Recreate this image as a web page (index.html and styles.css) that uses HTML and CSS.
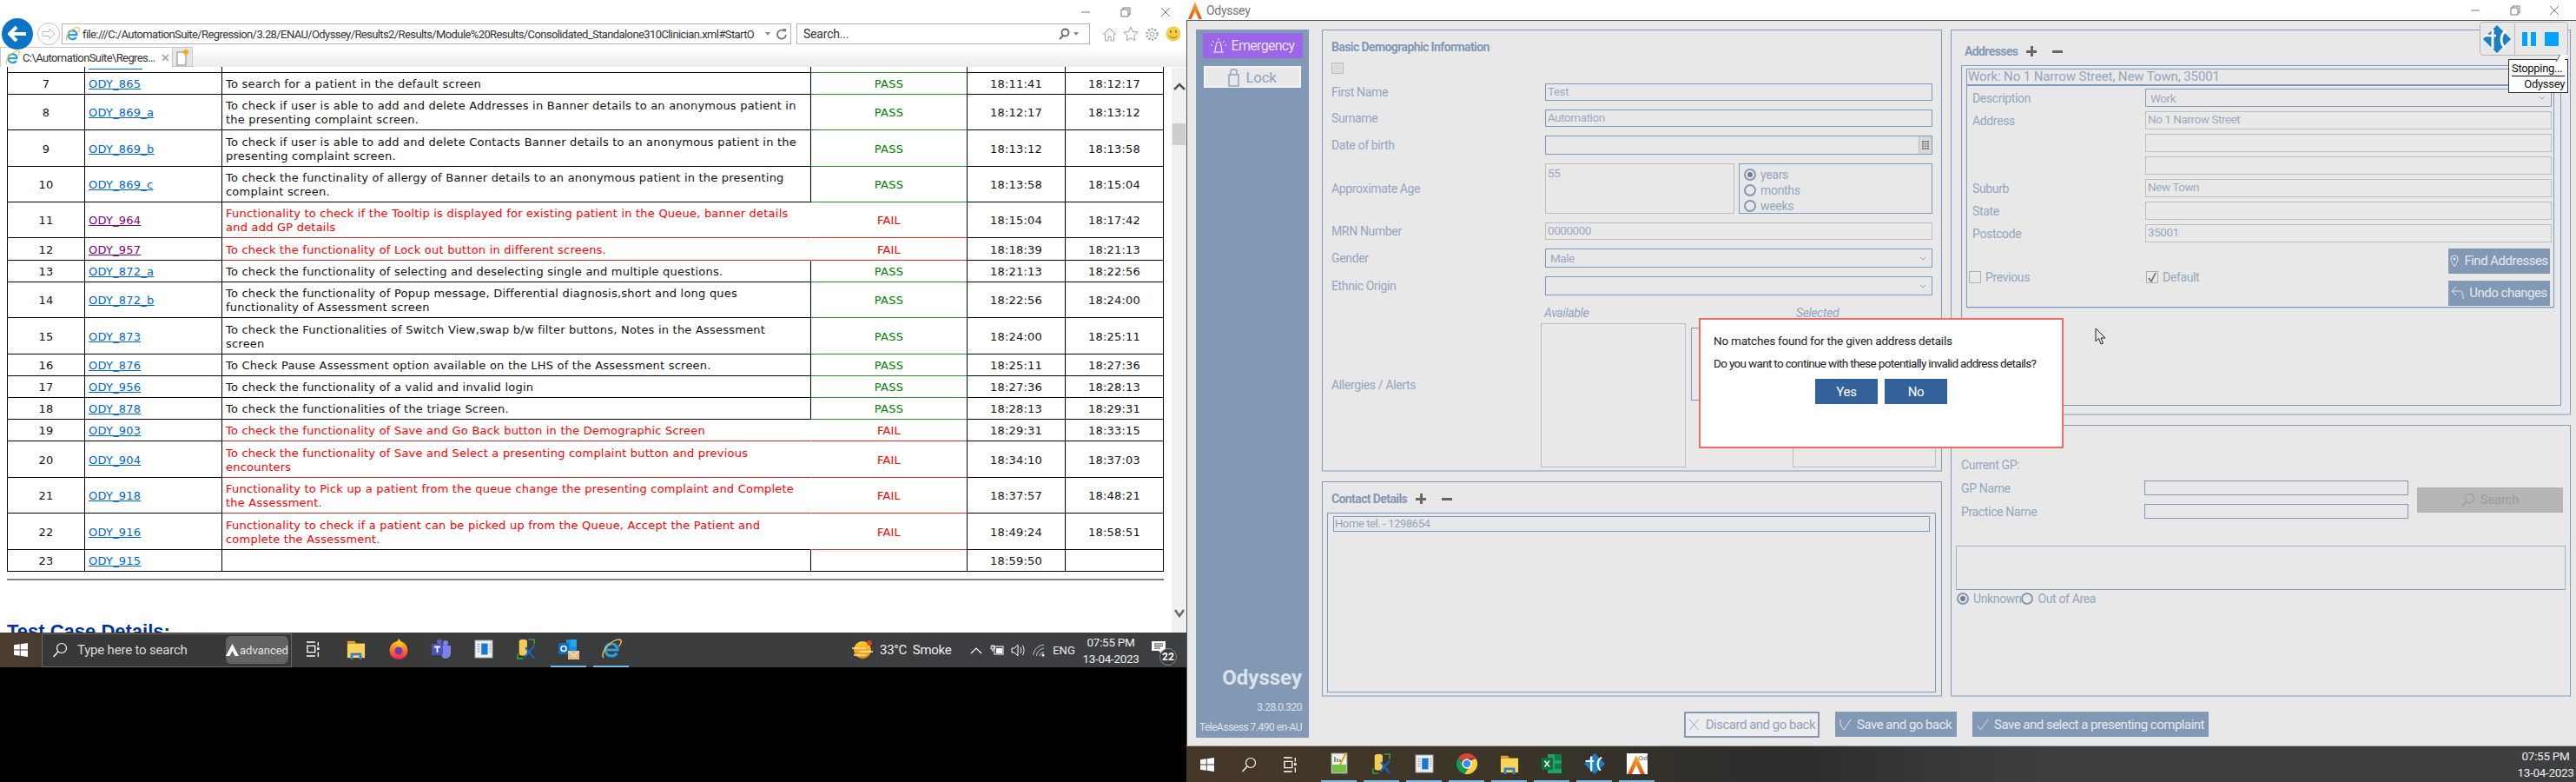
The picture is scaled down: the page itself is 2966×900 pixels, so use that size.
FILE: index.html
```html
<!DOCTYPE html>
<html lang="en">
<head>
<meta charset="utf-8">
<title>Odyssey regression run</title>
<link rel="stylesheet" href="styles.css">
</head>
<body>
<svg class="sprite" xmlns="http://www.w3.org/2000/svg">
  <defs>
    <linearGradient id="fox" x1="0" y1="0" x2="0" y2="1"><stop offset="0" stop-color="#ffc21f"/><stop offset=".55" stop-color="#ff6a2b"/><stop offset="1" stop-color="#e8215f"/></linearGradient>
    <linearGradient id="peak" x1="0" y1="0" x2="0" y2="1"><stop offset="0" stop-color="#f9b233"/><stop offset="1" stop-color="#e2560f"/></linearGradient>
    <linearGradient id="sun" x1="0" y1="0" x2="0" y2="1"><stop offset="0" stop-color="#ffcc2e"/><stop offset="1" stop-color="#ee8a16"/></linearGradient>
    <symbol id="win" viewBox="0 0 16 16"><path fill="currentColor" d="M0 2.3 6.8 1.3V7.6H0ZM7.7 1.2 16 0V7.6H7.7ZM0 8.4H6.8V14.7L0 13.7ZM7.7 8.4H16V16L7.7 14.8Z"/></symbol>
    <symbol id="find" viewBox="0 0 18 18"><circle cx="11" cy="7" r="5.5" fill="none" stroke="currentColor" stroke-width="1.2"/><path d="M7 11 1.5 17" stroke="currentColor" stroke-width="1.4"/></symbol>
    <symbol id="view" viewBox="0 0 18 22"><path d="M0 2H11M0 20H11M1 7H11V15H1ZM15 2V7M15 15V21" fill="none" stroke="#fff" stroke-width="1.5"/><rect x="13.5" y="9" width="3" height="3" fill="#fff"/></symbol>
    <symbol id="folder" viewBox="0 0 24 26"><path fill="#e0a521" d="M1 3H10L12 6H1Z"/><path fill="#fbd25a" d="M1 6H23V24H1Z"/><path fill="#2f7fd0" d="M5 18H19V26H16V21H8V26H5Z"/></symbol>
    <symbol id="ie" viewBox="0 0 24 24"><path d="M5.5 13H19C19 9 16 6 12 6S5 9 5 13 8 20 12 20C15 20 17 18.600 18 16.500" fill="none" stroke="#2a9fe0" stroke-width="3.200"/><path d="M3 22C0 19 4 11 10 6 16 1 21 0 23 2 24 4 22 7 20.500 9" fill="none" stroke="#f2bd3c" stroke-width="1.500"/></symbol>
    <symbol id="dock" viewBox="0 0 24 24"><rect x="1" y="1" width="22" height="22" fill="#eef1f4" stroke="#8a9199"/><rect x="9" y="5" width="8" height="14" fill="#1677d8"/><path d="M4 6H7M4 9H7M4 12H7M4 15H7M19 6H21M19 9H21M19 12H21M19 15H21" stroke="#7a8490"/></symbol>
    <symbol id="dbtool" viewBox="0 0 24 28"><path fill="#f3cc55" d="M3 4C3 1 13 1 13 4V20C13 23 3 23 3 20Z"/><path d="M15 2H22V8M1 20V26H8" fill="none" stroke="#37a03e" stroke-width="1.800"/><path d="M10 24 22 10M11 12 22 26" stroke="#1467b8" stroke-width="2.400"/></symbol>
    <symbol id="tosca" viewBox="0 0 32 40" preserveAspectRatio="none"><path fill="#1b7fc4" d="M16 0 32 20 16 40 0 20Z"/><path d="M2 15H15M11 6V34" stroke="#fff" stroke-width="3" fill="none"/><path d="M27 8C20 12 19 25 25 33" stroke="#fff" stroke-width="3" fill="none"/></symbol>
    <symbol id="peakmark" viewBox="0 0 16 20"><path fill="url(#peak)" d="M8 0 16 20H12.500L8 11 3.500 20H0Z"/></symbol>
  </defs>
</svg>

<div class="desktop">
  <section class="screen screen-left">
    <div class="ie">
      <div class="ie-title">
        <div class="win-btn"><svg width="12" height="12" viewBox="0 0 12 12"><path d="M1 6H11" stroke="#777"/></svg></div>
        <div class="win-btn"><svg width="12" height="12" viewBox="0 0 12 12"><path d="M3 3V1H11V9H9M1 3H9V11H1Z" fill="none" stroke="#777"/></svg></div>
        <div class="win-btn"><svg width="12" height="12" viewBox="0 0 12 12"><path d="M1 1 11 11M11 1 1 11" stroke="#777"/></svg></div>
      </div>
      <div class="ie-nav">
        <div class="back"><svg width="22" height="20" viewBox="0 0 22 20"><path d="M10 2 2 10 10 18M2 10H21" fill="none" stroke="#fff" stroke-width="4"/></svg></div>
        <div class="forward"><svg width="16" height="14" viewBox="0 0 16 14"><path d="M9 1 15 7 9 13V9.500H1V4.500H9Z" fill="none" stroke="#bbb"/></svg></div>
        <div class="address">
          <svg width="17" height="17"><use href="#ie"/></svg>
          <span class="url">file:///C:/AutomationSuite/Regression/3.28/ENAU/Odyssey/Results2/Results/Module%20Results/Consolidated_Standalone310Clinician.xml#StartO</span>
          <span class="caret"></span>
          <svg width="12" height="14" viewBox="0 0 12 14"><path d="M9.500 4A5 5 0 1 0 11 8" fill="none" stroke="#777" stroke-width="1.800"/><path d="M7 1 11 1V5Z" fill="#777"/></svg>
        </div>
        <div class="searchbox">
          <span class="search-hint">Search...</span>
          <svg width="14" height="14" viewBox="0 0 14 14"><circle cx="8.500" cy="5.500" r="4" fill="none" stroke="#666" stroke-width="1.800"/><path d="M6 9 2 13" stroke="#666" stroke-width="2"/></svg>
          <span class="caret"></span>
        </div>
        <div class="tools">
          <svg width="17" height="17" viewBox="0 0 17 17"><path d="M1 9 8.500 1.500 16 9M3.500 8V16H7V11H10V16H13.500V8" fill="none" stroke="#9aa0a6"/></svg>
          <svg width="18" height="18" viewBox="0 0 18 18"><path d="M9 1 11.400 6.500 17 7 12.800 10.800 14 16.500 9 13.600 4 16.500 5.200 10.800 1 7 6.600 6.500Z" fill="none" stroke="#9aa0a6"/></svg>
          <svg width="17" height="17" viewBox="0 0 17 17"><circle cx="8.500" cy="8.500" r="2.500" fill="none" stroke="#9aa0a6"/><circle cx="8.500" cy="8.500" r="6" fill="none" stroke="#9aa0a6" stroke-width="2.400" stroke-dasharray="2 1.800"/></svg>
          <svg width="18" height="18" viewBox="0 0 18 18"><circle cx="9" cy="9" r="8.500" fill="#f3cf45"/><path d="M6 5V8M12 5V8" stroke="#8a6d10" stroke-width="1.500"/><path d="M4.500 11C6 14.500 12 14.500 13.500 11" fill="none" stroke="#8a6d10"/></svg>
        </div>
      </div>
      <div class="ie-tabs">
        <div class="tab">
          <svg width="17" height="17"><use href="#ie"/></svg>
          <span class="tab-title">C:\AutomationSuite\Regres...</span>
          <svg width="9" height="9" viewBox="0 0 9 9"><path d="M1 1 8 8M8 1 1 8" stroke="#999" stroke-width="1.500"/></svg>
        </div>
        <div class="newtab"><svg width="15" height="20" viewBox="0 0 15 20"><rect x="1" y="4" width="10" height="15" fill="#fff" stroke="#888"/><path d="M11 0V8M7.500 4H14.500M8.500 1.500 13.500 6.500M13.500 1.500 8.500 6.500" stroke="#f2a81d" stroke-width="1.300"/></svg></div>
      </div>
      <div class="ie-page">
        <div class="doc">
          <table class="results">
            <colgroup><col class="c-num"><col class="c-id"><col class="c-desc"><col class="c-status"><col class="c-time"><col class="c-time"></colgroup>
            <tbody>
              <tr class="h25 pass"><td></td><td><span class="clip-link"></span></td><td></td><td class="s"></td><td></td><td></td></tr>
              <tr class="h25 pass"><td>7</td><td><a href="#">ODY_865</a></td><td>To search for a patient in the default screen</td><td class="s">PASS</td><td>18:11:41</td><td>18:12:17</td></tr>
              <tr class="h41 pass"><td>8</td><td><a href="#">ODY_869_a</a></td><td>To check if user is able to add and delete Addresses in Banner details to an anonymous patient in<br>the presenting complaint screen.</td><td class="s">PASS</td><td>18:12:17</td><td>18:13:12</td></tr>
              <tr class="h42 pass"><td>9</td><td><a href="#">ODY_869_b</a></td><td>To check if user is able to add and delete Contacts Banner details to an anonymous patient in the<br>presenting complaint screen.</td><td class="s">PASS</td><td>18:13:12</td><td>18:13:58</td></tr>
              <tr class="h41 pass"><td>10</td><td><a href="#">ODY_869_c</a></td><td>To check the functinality of allergy of Banner details to an anonymous patient in the presenting<br>complaint screen.</td><td class="s">PASS</td><td>18:13:58</td><td>18:15:04</td></tr>
              <tr class="h41 fail"><td>11</td><td><a class="seen" href="#">ODY_964</a></td><td class="d">Functionality to check if the Tooltip is displayed for existing patient in the Queue, banner details<br>and add GP details</td><td class="s">FAIL</td><td>18:15:04</td><td>18:17:42</td></tr>
              <tr class="h26 fail"><td>12</td><td><a class="seen" href="#">ODY_957</a></td><td class="d">To check the functionality of Lock out button in different screens.</td><td class="s">FAIL</td><td>18:18:39</td><td>18:21:13</td></tr>
              <tr class="h25 pass"><td>13</td><td><a href="#">ODY_872_a</a></td><td>To check the functionality of selecting and deselecting single and multiple questions.</td><td class="s">PASS</td><td>18:21:13</td><td>18:22:56</td></tr>
              <tr class="h41 pass"><td>14</td><td><a href="#">ODY_872_b</a></td><td>To check the functionality of Popup message, Differential diagnosis,short and long ques<br>functionality of Assessment screen</td><td class="s">PASS</td><td>18:22:56</td><td>18:24:00</td></tr>
              <tr class="h42 pass"><td>15</td><td><a href="#">ODY_873</a></td><td>To check the Functionalities of Switch View,swap b/w filter buttons, Notes in the Assessment<br>screen</td><td class="s">PASS</td><td>18:24:00</td><td>18:25:11</td></tr>
              <tr class="h25 pass"><td>16</td><td><a href="#">ODY_876</a></td><td>To Check Pause Assessment option available on the LHS of the Assessment screen.</td><td class="s">PASS</td><td>18:25:11</td><td>18:27:36</td></tr>
              <tr class="h25 pass"><td>17</td><td><a href="#">ODY_956</a></td><td>To check the functionality of a valid and invalid login</td><td class="s">PASS</td><td>18:27:36</td><td>18:28:13</td></tr>
              <tr class="h25 pass"><td>18</td><td><a href="#">ODY_878</a></td><td>To check the functionalities of the triage Screen.</td><td class="s">PASS</td><td>18:28:13</td><td>18:29:31</td></tr>
              <tr class="h25 fail"><td>19</td><td><a href="#">ODY_903</a></td><td class="d">To check the functionality of Save and Go Back button in the Demographic Screen</td><td class="s">FAIL</td><td>18:29:31</td><td>18:33:15</td></tr>
              <tr class="h42 fail"><td>20</td><td><a href="#">ODY_904</a></td><td class="d">To check the functionality of Save and Select a presenting complaint button and previous<br>encounters</td><td class="s">FAIL</td><td>18:34:10</td><td>18:37:03</td></tr>
              <tr class="h41 fail"><td>21</td><td><a href="#">ODY_918</a></td><td class="d">Functionality to Pick up a patient from the queue change the presenting complaint and Complete<br>the Assessment.</td><td class="s">FAIL</td><td>18:37:57</td><td>18:48:21</td></tr>
              <tr class="h42 fail last-fail"><td>22</td><td><a href="#">ODY_916</a></td><td class="d">Functionality to check if a patient can be picked up from the Queue, Accept the Patient and<br>complete the Assessment.</td><td class="s">FAIL</td><td>18:49:24</td><td>18:58:51</td></tr>
              <tr class="h25"><td>23</td><td><a href="#">ODY_915</a></td><td></td><td class="s"></td><td>18:59:50</td><td></td></tr>
            </tbody>
          </table>
          <hr class="rule">
          <h2 class="details-title">Test Case Details:</h2>
        </div>
        <div class="scrollbar">
          <svg class="sb-up" width="14" height="10" viewBox="0 0 14 10"><path d="M1 8 7 2 13 8" fill="none" stroke="#555" stroke-width="2.500"/></svg>
          <div class="sb-thumb"></div>
          <svg class="sb-down" width="12" height="10" viewBox="0 0 12 10"><path d="M1 1 6 8 11 1" fill="none" stroke="#666" stroke-width="2.500"/></svg>
        </div>
      </div>
    </div>
    <div class="taskbar">
      <div class="start"><svg width="16" height="16"><use href="#win"/></svg></div>
      <div class="searchbar">
        <svg width="18" height="18"><use href="#find"/></svg>
        <span class="search-text">Type here to search</span>
        <div class="brand"><svg width="15" height="14" viewBox="0 0 15 14"><path fill="#fff" d="M7.500 0 15 14H10.500L7.500 8 4.500 14H0Z"/></svg><span>advanced</span></div>
      </div>
      <div class="cell"><svg width="16" height="20"><use href="#view"/></svg></div>
      <div class="cell"><svg width="22" height="24"><use href="#folder"/></svg></div>
      <div class="cell"><svg width="24" height="24" viewBox="0 0 24 24"><circle cx="12" cy="13.500" r="10.500" fill="url(#fox)"/><path d="M12 0C17 5 17 8 14 11L9 6Z" fill="#ffc21f"/><circle cx="12" cy="14" r="4.500" fill="#6b3bb5"/></svg></div>
      <div class="cell"><svg width="24" height="24" viewBox="0 0 24 24"><circle cx="17" cy="5" r="3" fill="#7b83eb"/><circle cx="10" cy="3.500" r="3" fill="#5b5fc7"/><path d="M12 8H23V17C23 20 20 23 17 23 14 23 12 20 12 17Z" fill="#7b83eb"/><rect x="1" y="6" width="13" height="13" rx="1" fill="#4b53bc"/><path d="M4 9.500H11M7.500 9.500V16" stroke="#fff" stroke-width="1.800"/></svg></div>
      <div class="cell"><svg width="22" height="22"><use href="#dock"/></svg></div>
      <div class="cell"><svg width="22" height="26"><use href="#dbtool"/></svg></div>
      <div class="cell active"><svg width="26" height="24" viewBox="0 0 26 24"><rect x="10" y="1" width="12" height="16" fill="#1490df"/><rect x="15" y="1" width="7" height="8" fill="#28a8ea"/><rect x="1" y="5" width="12" height="13" fill="#0f6cbd"/><circle cx="7" cy="11.500" r="3" fill="none" stroke="#fff" stroke-width="1.600"/><rect x="12" y="14" width="13" height="10" fill="#e9b98a"/><path d="M12 14 18.500 20 25 14" fill="none" stroke="#fff"/></svg></div>
      <div class="cell active"><svg width="24" height="24"><use href="#ie"/></svg></div>
      <div class="tray">
        <svg class="weather" width="24" height="22" viewBox="0 0 24 22"><circle cx="12" cy="11" r="10" fill="url(#sun)"/><path d="M0 9H15M8 13H24M2 17H16" stroke="#fbe7a5" stroke-width="1.400"/><circle cx="20" cy="3" r="3" fill="#d9432c"/></svg>
        <span class="weather-text">33°C&nbsp; Smoke</span>
        <div class="tray-cell"><svg width="14" height="9" viewBox="0 0 14 9"><path d="M1 8 7 2 13 8" fill="none" stroke="#fff" stroke-width="1.200"/></svg></div>
        <div class="tray-cell"><svg width="16" height="12" viewBox="0 0 16 12"><rect x="5" y="2" width="10" height="9" fill="none" stroke="#fff"/><rect x="7" y="4" width="7" height="6" fill="#fff"/><path d="M2 0V2M4 0V2M1 2H5V5H1ZM3 5V8" stroke="#fff" fill="none"/></svg></div>
        <div class="tray-cell"><svg width="17" height="15" viewBox="0 0 17 15"><path d="M1 5H4L8 1V14L4 10H1Z" fill="none" stroke="#fff"/><path d="M11 4C12 6 12 9 11 11M13.500 2C15.500 6 15.500 9 13.500 13" fill="none" stroke="#fff"/></svg></div>
        <div class="tray-cell"><svg width="14" height="15" viewBox="0 0 14 15"><path d="M1 13C1 7 6 2 13 1M4.500 14C4.500 9.500 8 6 13 5M8 14C8 12 10 10 13 9.500" fill="none" stroke="#c9cdd0"/><circle cx="12" cy="13" r="1.500" fill="#fff"/></svg></div>
        <span class="lang">ENG</span>
        <div class="clock"><span>07:55 PM</span><span>13-04-2023</span></div>
        <div class="notif">
          <svg width="16" height="15" viewBox="0 0 16 15"><path fill="#fff" d="M0 0H16V11H12V15L8 11H0Z"/><path d="M3 3H13M3 5.500H13M3 8H10" stroke="#333"/></svg>
          <span class="badge">22</span>
        </div>
      </div>
    </div>
    <div class="black"></div>
  </section>

  <section class="screen screen-right">
    <div class="app">
      <div class="app-title">
        <svg width="16" height="20"><use href="#peakmark"/></svg>
        <span class="app-name">Odyssey</span>
        <div class="app-controls">
          <div class="win-btn"><svg width="12" height="12" viewBox="0 0 12 12"><path d="M1 6H11" stroke="#777"/></svg></div>
          <div class="win-btn"><svg width="12" height="12" viewBox="0 0 12 12"><path d="M3 3V1H11V9H9M1 3H9V11H1Z" fill="none" stroke="#777"/></svg></div>
          <div class="win-btn"><svg width="12" height="12" viewBox="0 0 12 12"><path d="M1 1 11 11M11 1 1 11" stroke="#777"/></svg></div>
        </div>
      </div>
      <div class="app-body">
        <aside class="rail">
          <button class="btn-emergency"><svg width="18" height="18" viewBox="0 0 18 18"><path d="M5 15 6.500 6C7 3.500 11 3.500 11.500 6L13 15M3 16H15M9 0V2M2 3 4 5M16 3 14 5M0 8H2M16 8H18" fill="none" stroke="#fff"/></svg><span>Emergency</span></button>
          <button class="btn-lock"><svg width="13" height="22" viewBox="0 0 13 22"><rect x="1" y="8" width="11" height="13" fill="none" stroke="#8fa3bd" stroke-width="1.500"/><path d="M3 8V4C3 1 10 1 10 4V8" fill="none" stroke="#8fa3bd" stroke-width="1.500"/></svg><span>Lock</span></button>
          <div class="rail-info">
            <div class="rail-name">Odyssey</div>
            <div class="rail-ver">3.28.0.320</div>
            <div class="rail-tele">TeleAssess 7.490 en-AU</div>
          </div>
        </aside>
        <main class="main">
          <div class="columns">
            <div class="col">
              <section class="panel basic">
                <h3 class="panel-title">Basic Demographic Information</h3>
                <span class="check-off"></span>
                <div class="fields">
                  <label class="lbl">First Name</label><div class="box blue h20">Test</div>
                  <label class="lbl">Surname</label><div class="box blue h20">Automation</div>
                  <label class="lbl">Date of birth</label>
                  <div class="box blue h22 dob"><span class="cal"><svg width="8" height="10" viewBox="0 0 8 10"><path d="M0 0H8V10H0Z" fill="#777"/><path d="M0 2.500H8M0 5H8M0 7.500H8M2.700 0V10M5.300 0V10" stroke="#e8e8e8" stroke-width=".8"/></svg></span></div>
                  <label class="lbl">Approximate Age</label>
                  <div class="age">
                    <div class="box grey age-value">55</div>
                    <div class="age-unit">
                      <div class="radio-row"><span class="radio on"></span><span>years</span></div>
                      <div class="radio-row"><span class="radio"></span><span>months</span></div>
                      <div class="radio-row"><span class="radio"></span><span>weeks</span></div>
                    </div>
                  </div>
                  <label class="lbl">MRN Number</label><div class="box grey h20">0000000</div>
                  <label class="lbl">Gender</label><div class="box blue h22 select"><span class="sel-val">Male</span><svg width="8" height="5" viewBox="0 0 8 5"><path d="M1 1 4 4 7 1" fill="none" stroke="#8fa3bd"/></svg></div>
                  <label class="lbl">Ethnic Origin</label><div class="box blue h22 select"><span></span><svg width="8" height="5" viewBox="0 0 8 5"><path d="M1 1 4 4 7 1" fill="none" stroke="#8fa3bd"/></svg></div>
                </div>
                <div class="allergy">
                  <span></span><span class="list-head">Available</span><span></span><span class="list-head">Selected</span>
                  <label class="lbl allergy-label">Allergies / Alerts</label>
                  <div class="list-box"></div>
                  <div class="mid-box"></div>
                  <div class="list-box"></div>
                </div>
              </section>
              <section class="panel contact">
                <div class="title-row"><h3 class="panel-title">Contact Details</h3><span class="plus"></span><span class="minus"></span></div>
                <div class="contact-box"><div class="contact-item">Home tel. - 1298654</div></div>
              </section>
            </div>
            <div class="col">
              <section class="panel addresses">
                <div class="title-row"><h3 class="panel-title">Addresses</h3><span class="plus"></span><span class="minus"></span></div>
                <div class="addr-outer">
                  <div class="addr-inner">
                    <div class="addr-head">Work: No 1 Narrow Street, New Town, 35001</div>
                    <div class="addr-fields">
                      <label class="lbl">Description</label><div class="box blue h21 select"><span class="sel-val">Work</span><svg width="8" height="5" viewBox="0 0 8 5"><path d="M1 1 4 4 7 1" fill="none" stroke="#8fa3bd"/></svg></div>
                      <label class="lbl">Address</label><div class="box grey h21">No 1 Narrow Street</div>
                      <span></span><div class="box grey h21"></div>
                      <span></span><div class="box grey h21"></div>
                      <label class="lbl">Suburb</label><div class="box grey h21">New Town</div>
                      <label class="lbl">State</label><div class="box grey h21"></div>
                      <label class="lbl">Postcode</label><div class="box grey h21">35001</div>
                    </div>
                    <div class="addr-foot">
                      <div class="tick tick-prev"><span class="check"></span><span>Previous</span></div>
                      <div class="tick"><span class="check"><svg width="10" height="12" viewBox="0 0 10 12"><path d="M1 7 4 11 9 1" fill="none" stroke="#666" stroke-width="1.500"/></svg></span><span>Default</span></div>
                      <div class="addr-actions">
                        <button class="btn-fill"><svg width="10" height="15" viewBox="0 0 10 15"><path d="M5 14C2 9 1 7 1 5A4 4 0 0 1 9 5C9 7 8 9 5 14Z" fill="none" stroke="#e4e9ef"/><circle cx="5" cy="5" r="1.500" fill="#e4e9ef"/></svg><span>Find Addresses</span></button>
                        <button class="btn-fill"><svg width="15" height="16" viewBox="0 0 15 16"><path d="M6 1 1 6 6 11M1 6H10C13 6 14 8 14 15" fill="none" stroke="#e4e9ef"/></svg><span>Undo changes</span></button>
                      </div>
                    </div>
                  </div>
                </div>
              </section>
              <section class="panel gp">
                <div class="gp-grid">
                  <label class="lbl gp-wide">Current GP:</label>
                  <label class="lbl">GP Name</label><div class="box blue"></div>
                  <button class="btn-search"><svg width="17" height="17"><use href="#find"/></svg><span>Search</span></button>
                  <label class="lbl">Practice Name</label><div class="box blue"></div>
                </div>
                <div class="gp-notes"></div>
                <div class="gp-radios">
                  <span class="radio on"></span><span class="gp-radio-text">Unknown</span>
                  <span class="radio"></span><span class="gp-radio-text">Out of Area</span>
                </div>
              </section>
            </div>
          </div>
          <div class="actions">
            <button class="btn-outline"><svg width="14" height="16" viewBox="0 0 14 16"><path d="M1 1 13 15M13 1 1 15" stroke="#8fa3bd"/></svg><span>Discard and go back</span></button>
            <button class="btn-fill act-back"><svg width="14" height="14" viewBox="0 0 14 14"><path d="M1 1V7L5 13 13 1" fill="none" stroke="#e4e9ef"/></svg><span>Save and go back</span></button>
            <button class="btn-fill act-next"><svg width="16" height="16" viewBox="0 0 16 16"><path d="M1 9 5 15 15 1" fill="none" stroke="#e4e9ef"/></svg><span>Save and select a presenting complaint</span></button>
          </div>
        </main>
      </div>
    </div>
    <div class="taskbar taskbar-right">
      <div class="start"><svg width="16" height="16"><use href="#win"/></svg></div>
      <div class="cell-plain"><svg width="18" height="18"><use href="#find"/></svg></div>
      <div class="cell-plain"><svg width="16" height="20"><use href="#view"/></svg></div>
      <div class="cell active first"><svg width="20" height="25" viewBox="0 0 20 25"><rect x="1" y="1" width="18" height="23" fill="#eef2e6" stroke="#8a8f80"/><rect x="2" y="14" width="16" height="9" fill="#76c043"/><path d="M5 5V11M8 7V11M11 8V11" stroke="#333"/><path d="M18 0 11 14" stroke="#d9a521" stroke-width="2"/></svg></div>
      <div class="cell active"><svg width="22" height="26"><use href="#dbtool"/></svg></div>
      <div class="cell active"><svg width="22" height="22"><use href="#dock"/></svg></div>
      <div class="cell active"><svg width="24" height="24" viewBox="0 0 24 24"><path fill="#db4437" d="M12 0A12 12 0 0 1 22.400 6H12A6 6 0 0 0 6.400 9.800L2.500 4.600A12 12 0 0 1 12 0Z"/><path fill="#0f9d58" d="M2.500 4.600 7 12A6 6 0 0 0 13 17.900L9.500 23.700A12 12 0 0 1 2.500 4.600Z"/><path fill="#ffcd40" d="M22.400 6A12 12 0 0 1 9.500 23.700L15 15A6 6 0 0 0 16 8Z"/><circle cx="12" cy="12" r="5" fill="#4285f4" stroke="#fff" stroke-width="1.500"/></svg></div>
      <div class="cell active"><svg width="22" height="24"><use href="#folder"/></svg></div>
      <div class="cell active"><svg width="24" height="24" viewBox="0 0 24 24"><path fill="#21a366" d="M7 1H23V23H7Z"/><path fill="#107c41" d="M15 1H23V8H15ZM15 12H23V18H15Z"/><rect y="5" width="13" height="14" fill="#0f6e3a"/><path d="M3.500 8.500 9 15.500M9 8.500 3.500 15.500" stroke="#fff" stroke-width="1.500"/></svg></div>
      <div class="cell active"><svg width="24" height="24"><use href="#tosca"/></svg></div>
      <div class="cell active"><svg class="ody-tile" width="24" height="24" viewBox="0 0 24 24"><rect width="24" height="24" fill="#fff"/><path fill="url(#peak)" d="M11 2 21 24H16L11 13 6 24H1Z"/><text x="13" y="8" class="ody-tile-text">Od</text></svg></div>
      <div class="clock clock-right"><span>07:55 PM</span><span>13-04-2023</span></div>
    </div>

    <div class="modal">
      <p class="modal-line">No matches found for the given address details</p>
      <p class="modal-line second">Do you want to continue with these potentially invalid address details?</p>
      <div class="modal-buttons"><button class="btn-modal">Yes</button><button class="btn-modal">No</button></div>
    </div>
    <div class="runner">
      <svg width="32" height="32"><use href="#tosca"/></svg>
      <span class="runner-sep"></span>
      <span class="pause"></span>
      <span class="stop"></span>
    </div>
    <div class="runner-tip">
      <div class="tip-top">Stopping...</div>
      <div class="tip-bottom">Odyssey</div>
    </div>
    <svg class="pointer" width="14" height="20" viewBox="0 0 14 20"><path d="M1 1V16L4.500 12.500 7 19 9.500 18 7 12H12Z" fill="#e8e8e8" stroke="#222"/></svg>
  </section>
</div>
</body>
</html>
```
FILE: styles.css
```css
:root {
  --slate: #8299b5;
  --line: #7f9abf;
  --soft: #93a6be;
  --bg: #e8e8e8;
}
* { box-sizing: border-box; }
html, body { margin: 0; padding: 0; background: #000; overflow: hidden; }
body { width: 2966px; height: 900px; font-family: Roboto, "Liberation Sans", sans-serif; }
.sprite { display: block; width: 0; height: 0; }
.desktop { display: flex; width: 2966px; height: 900px; }
.screen { display: flex; flex-direction: column; height: 900px; }
.screen-left { width: 1366px; }
.screen-right { width: 1600px; position: relative; }
button { font: inherit; border: 0; margin: 0; padding: 0; }

/* IE window */
.ie { height: 728px; background: #fff; display: flex; flex-direction: column; }
.ie-title { height: 27px; display: flex; justify-content: flex-end; padding-right: 1px; }
.win-btn { width: 46px; height: 27px; display: flex; align-items: center; justify-content: center; }
.ie-nav { height: 27px; display: flex; align-items: flex-start; padding-left: 2px; }
.back { width: 36px; height: 36px; margin-top: -6px; border-radius: 50%; background: #0b74c4; display: flex; align-items: center; justify-content: center; z-index: 1; }
.forward { width: 26px; height: 26px; margin: -1px 2px 0 5px; border-radius: 50%; border: 1px solid #c4c4c4; display: flex; align-items: center; justify-content: center; }
.address { width: 840px; height: 24px; border: 1px solid #b5b5b5; display: flex; align-items: center; padding: 0 4px 0 3px; gap: 3px; }
.url { font-size: 13px; color: #333; flex: 1; min-width: 0; white-space: nowrap; overflow: hidden; letter-spacing: -.6px; }
.caret { width: 0; height: 0; border-left: 3.5px solid transparent; border-right: 3.5px solid transparent; border-top: 4px solid #888; margin: 0 4px; flex: none; }
.address svg { flex: none; }
.searchbox { width: 338px; height: 24px; margin-left: 6px; border: 1px solid #b5b5b5; display: flex; align-items: center; padding: 0 8px 0 7px; }
.search-hint { font-size: 14px; color: #333; flex: 1; letter-spacing: -.2px; }
.tools { display: flex; align-items: center; gap: 7px; margin-left: 14px; height: 24px; }
.ie-tabs { height: 23px; display: flex; background: linear-gradient(#fff, #ececec); }
.tab { width: 199px; height: 23px; border: 1px solid #c8c8c8; border-bottom: 0; background: #fff; display: flex; align-items: center; gap: 3px; padding: 0 3px 0 5px; }
.tab svg { flex: none; }
.tab-title { font-size: 13px; color: #333; flex: 1; min-width: 0; white-space: nowrap; letter-spacing: -.6px; }
.newtab { width: 23px; height: 23px; background: #e6e6e6; border: 1px solid #c8c8c8; border-left: 0; display: flex; align-items: center; justify-content: center; }
.ie-page { height: 651px; display: flex; overflow: hidden; }
.doc { width: 1349px; padding-left: 8px; overflow: hidden; }

.results { width: 1332px; table-layout: fixed; border-collapse: separate; border-spacing: 0; margin-top: -18px; font-family: "DejaVu Sans", sans-serif; font-size: 13px; line-height: 16px; letter-spacing: .22px; color: #111; }
.c-num { width: 90px; }
.c-id { width: 158px; }
.c-desc { width: 678px; }
.c-status { width: 180px; }
.c-time { width: 113px; }
.results td { border-right: 1px solid #000; border-bottom: 1px solid #000; padding: 2px 4px 0; text-align: center; white-space: nowrap; overflow: hidden; }
.results td:first-child { border-left: 1px solid #000; }
.results td:nth-child(2), .results td:nth-child(3) { text-align: left; }
.results a { color: #0066cc; }
.results a.seen { color: #800080; }
.clip-link { display: block; width: 62px; height: 15px; border-bottom: 1px solid #0066cc; }
.h25 { height: 25px; }
.h26 { height: 26px; }
.h41 { height: 41px; }
.h42 { height: 42px; }
.pass .s { color: #008000; border-bottom-color: #2f8f2f; }
.fail .s { color: #f00; border-bottom-color: #d23030; }
.fail td.d { color: #f00; border-right-color: transparent; border-bottom-color: #b83232; }
.last-fail td.d { border-bottom-color: #000; }
.rule { margin: 8px 0 0; height: 2px; border: 0; background: #808080; width: 1332px; }
.details-title { margin: 46px 0 0; font: bold 22px/26px "Liberation Sans", sans-serif; color: #003399; }
.scrollbar { width: 17px; background: #f0f0f0; margin-top: 1px; display: flex; flex-direction: column; align-items: center; }
.sb-up { margin-top: 17px; flex: none; }
.sb-thumb { width: 15px; height: 25px; background: #cdcdcd; margin-top: 37px; flex: none; }
.sb-down { margin-top: 534px; flex: none; }

/* taskbars */
.taskbar { height: 40px; display: flex; align-items: center; background: linear-gradient(90deg, #4b3d30 0, #3a3a3a 380px, #3d4043 100%); color: #fff; }
.start { width: 48px; height: 40px; display: flex; align-items: center; justify-content: center; color: #fff; }
.searchbar { width: 288px; height: 39px; background: #383838; border: 1px solid #686868; display: flex; align-items: center; padding-left: 11px; }
.search-text { font-size: 15px; color: #dcdcdc; margin-left: 11px; flex: 1; letter-spacing: -.2px; }
.brand { width: 72px; height: 32px; background: #636363; border-radius: 6px; margin-right: 3px; display: flex; align-items: center; justify-content: center; gap: 1px; font-size: 13px; color: #e4e4e4; }
.cell { width: 41px; height: 40px; margin: 0 4px; display: flex; align-items: center; justify-content: center; border-bottom: 2px solid transparent; }
.cell.active { border-bottom-color: #76b9ed; }
.cell-plain { width: 48px; height: 40px; display: flex; align-items: center; justify-content: center; }
.tray { margin-left: auto; display: flex; align-items: center; height: 40px; padding-right: 5px; }
.weather-text { font-size: 15px; width: 80px; margin: 0 19px 0 8px; letter-spacing: -.3px; color: #eee; white-space: nowrap; }
.tray-cell { width: 24px; display: flex; justify-content: center; }
.lang { width: 34px; font-size: 13px; text-align: center; color: #eee; }
.clock { width: 74px; display: flex; flex-direction: column; align-items: center; gap: 3px; font-size: 13.500px; line-height: 16px; letter-spacing: -.3px; color: #eee; }
.notif { width: 45px; height: 40px; display: flex; padding: 10px 0 0 10px; position: relative; }
.badge { width: 20px; height: 20px; margin: 8px 0 0 -7px; border: 1px solid #8a8a8a; border-radius: 50%; background: #3a3a3a; font-size: 12px; font-weight: 700; line-height: 18px; text-align: center; }
.taskbar-right { height: 41px; background: linear-gradient(90deg, #453728 0, #3b3528 360px, #2d2d2d 700px, #3d3f41 1000px); }
.taskbar-right .cell { height: 41px; }
.cell.first { margin-left: 11px; }
.clock-right { margin-left: auto; margin-right: 0; width: 70px; }
.ody-tile-text { font: bold 8px "Liberation Sans", sans-serif; fill: #888; }
.black { flex: 1; background: #000; }

/* app window */
.app { height: 859px; background: var(--bg); border-left: 1px solid #555; border-bottom: 1px solid #aaa; display: flex; flex-direction: column; }
.app-title { height: 24px; background: #fff; border-bottom: 1px solid #555; display: flex; align-items: center; padding-left: 2px; margin-left: -1px; }
.app-name { font-size: 14px; color: #777; margin-left: 5px; letter-spacing: -.3px; }
.app-controls { margin-left: auto; display: flex; padding-right: 2px; }
.app-controls .win-btn { height: 21px; width: 45.500px; }
.app-body { flex: 1; display: flex; padding: 10px 6px 9px 10px; gap: 15px; }
.rail { width: 130px; background: var(--slate); display: flex; flex-direction: column; align-items: center; padding-top: 4px; color: #dfe4ea; }
.btn-emergency { width: 115px; height: 29px; background: #9b66e8; color: #ecdfff; font-size: 16px; letter-spacing: -.7px; display: flex; align-items: center; justify-content: center; gap: 6px; }
.btn-lock { width: 112px; height: 25px; margin-top: 9px; background: var(--bg); border: 2px solid #f4f4f4; color: #8fa3bd; font-size: 17px; letter-spacing: -.3px; display: flex; align-items: center; justify-content: center; gap: 7px; }
.rail-info { margin-top: auto; width: 100%; padding: 0 8px 4px 0; text-align: right; white-space: nowrap; }
.rail-name { font-size: 24px; line-height: 30px; font-weight: 700; color: #dde2e9; }
.rail-ver { font-size: 12px; margin-top: 11px; line-height: 16px; letter-spacing: -.5px; }
.rail-tele { font-size: 12px; margin-top: 7px; line-height: 16px; letter-spacing: -.5px; }
.main { width: 1438px; display: flex; flex-direction: column; }
.columns { display: grid; grid-template-columns: 714px 714px; gap: 10px; height: 768px; }
.col { display: flex; flex-direction: column; gap: 11px; }
.panel { border: 1px solid #7f9abf; border-bottom: 2px solid #b4c2d3; }
.panel-title { margin: 0; font-size: 14px; line-height: 16px; font-weight: 700; color: var(--slate); letter-spacing: -.6px; }
.lbl { font-size: 14px; color: var(--soft); letter-spacing: -.35px; white-space: nowrap; align-self: center; }
.box { border: 1px solid; padding: 0 2px; font-size: 13.500px; line-height: 16px; color: #9aabc1; letter-spacing: -.45px; }
.blue { border-color: var(--line); }
.grey { border-color: #bdbdbd; }
.h20 { height: 20px; }
.h21 { height: 21px; }
.h22 { height: 22px; }

.basic { height: 509px; padding: 11px 6px 0 10px; }
.check-off { display: block; width: 14px; height: 13px; margin-top: 10px; background: #dcdcdc; border: 1px solid #bcbcbc; }
.fields { display: grid; grid-template-columns: 246px 1fr; row-gap: 10px; margin: 11px 4px 0 0; }
.dob { padding: 0; display: flex; justify-content: flex-end; }
.cal { width: 15px; background: #d8d8d8; border-left: 1px solid #bbb; display: flex; justify-content: center; padding-top: 5px; }
.age { display: flex; gap: 5px; height: 58px; }
.age-value { width: 218px; padding-top: 2px; }
.age-unit { flex: 1; border: 1px solid var(--line); padding: 3px 0 0 5px; }
.radio-row { display: flex; align-items: center; gap: 5px; height: 18px; font-size: 14px; color: var(--soft); letter-spacing: -.3px; }
.radio { display: inline-block; width: 14px; height: 14px; border: 2px solid var(--slate); border-radius: 50%; flex: none; padding: 2px; }
.radio.on { background: #6f7d8e content-box; }
.select { display: flex; align-items: center; justify-content: space-between; padding: 0 6px 0 5px; }
.allergy { display: grid; grid-template-columns: 241px 167px 123px 165px; grid-template-rows: 16px 166px; row-gap: 4px; margin-top: 12px; }
.list-head { font-size: 14px; font-style: italic; color: var(--soft); letter-spacing: -.35px; padding-left: 4px; }
.list-head:last-child { padding-left: 4px; }
.allergy-label { align-self: start; margin-top: 63px; }
.list-box { border: 1px solid #bdbdbd; }
.mid-box { border: 1px solid var(--line); width: 100px; height: 84px; margin: 5px 0 0 6px; }

.contact { height: 248px; padding: 11px 6px 0 5px; }
.title-row { display: flex; align-items: center; }
.contact .title-row { padding-left: 5px; }
.plus, .minus { display: inline-block; width: 12px; height: 12px; background: linear-gradient(#666, #666) center/12px 3px no-repeat; }
.plus { background: linear-gradient(#666, #666) center/12px 3px no-repeat, linear-gradient(#666, #666) center/3px 12px no-repeat; margin-left: 10px; }
.minus { margin-left: 18px; }
.contact-box { margin-top: 8px; height: 207px; border: 1px solid var(--line); padding: 3px 6px; }
.contact-item { height: 18px; border: 1px solid var(--line); padding: 0 1px; font-size: 13px; line-height: 16px; color: var(--soft); letter-spacing: -.4px; }

.addresses { height: 444px; padding: 16px 10px 0 11px; }
.addresses .title-row { padding-left: 4px; }
.addr-outer { margin-top: 8px; height: 392px; border: 1px solid var(--line); padding: 3px 7px 0 5px; }
.addr-inner { height: 275px; border: 1px solid var(--line); border-top-width: 1px; box-shadow: 0 2px 0 -1px #c6d0dc; }
.addr-head { height: 19px; border-bottom: 2px solid var(--line); font-size: 15px; line-height: 17px; color: var(--soft); letter-spacing: -.1px; padding-left: 1px; white-space: nowrap; }
.addr-fields { display: grid; grid-template-columns: 199px 468px; row-gap: 5px; padding: 3px 0 0 6px; }
.addr-foot { display: flex; align-items: center; height: 65px; margin-top: 7px; padding: 0 4px 0 2px; }
.tick { display: flex; align-items: center; gap: 5px; font-size: 14px; color: var(--soft); letter-spacing: -.35px; }
.tick-prev { width: 204px; }
.check { width: 14px; height: 14px; border: 1px solid #aeaeae; display: flex; align-items: center; justify-content: center; }
.addr-actions { margin-left: auto; width: 117px; display: flex; flex-direction: column; gap: 8px; }
.addr-actions .btn-fill { height: 29px; justify-content: center; padding: 0; }
.btn-fill { background: var(--slate); color: #e4e9ef; font-size: 15px; letter-spacing: -.5px; height: 29px; display: flex; align-items: center; gap: 6px; padding: 0 5px; white-space: nowrap; }
.act-back { width: 140px; }
.act-next { width: 272px; }

.gp { height: 313px; padding: 37px 5px 0 11px; }
.gp-grid { display: grid; grid-template-columns: 200.500px 304px 168px; grid-template-rows: 16px 17px 17px; column-gap: 10px; row-gap: 10px; }
.gp-wide { grid-column: 1 / 4; }
.btn-search { grid-column: 3; grid-row: 2 / 4; align-self: center; height: 29px; width: 168px; background: #b5b5b5; color: #9c9c9c; font-size: 15px; letter-spacing: -.3px; display: flex; align-items: center; justify-content: center; gap: 6px; }
.gp-notes { height: 51px; width: 702px; margin: 31px 0 0 -6px; border: 1px solid #9fb4cc; border-bottom-color: var(--line); }
.gp-radios { display: flex; align-items: center; margin: 2px 0 0 -5px; font-size: 14px; color: var(--soft); letter-spacing: -.35px; }
.gp-radio-text { margin: 0 0 0 5px; }
.gp-radio-text + .radio { margin-left: 0; }

.actions { display: flex; justify-content: center; gap: 18px; margin-top: 17px; height: 29px; }
.btn-outline { width: 156px; height: 30px; background: #ededed; border: 2px solid var(--slate); color: #8fa3bd; font-size: 15px; letter-spacing: -.5px; display: flex; align-items: center; gap: 7px; padding: 0 3px 0 3px; white-space: nowrap; }

/* overlays */
.modal { position: absolute; left: 590px; top: 366px; width: 420px; height: 150px; background: #fff; border: 2px solid #f26a6a; padding: 15px 0 0 15px; color: #222; font-size: 13.500px; letter-spacing: -.2px; }
.modal-line { margin: 0; line-height: 18px; }
.modal-line.second { margin-top: 8px; letter-spacing: -.67px; }
.modal-buttons { display: flex; justify-content: center; gap: 8px; margin: 9px 0 0 -15px; }
.btn-modal { width: 72px; height: 29px; background: #336199; color: #fff; font-size: 15px; letter-spacing: -.3px; }
.runner { position: absolute; left: 1489px; top: 25px; width: 102px; height: 39px; background: #e8e8e8; border: 1px solid #b5b5b5; border-radius: 4px; display: flex; align-items: center; padding-left: 3px; }
.runner-sep { width: 1px; height: 36px; background: #bbb; margin: 0 8px 0 4px; }
.pause { width: 16px; height: 16px; background: linear-gradient(90deg, #00a2ff 6px, transparent 6px, transparent 10px, #00a2ff 10px); }
.stop { width: 16px; height: 16px; background: #00a2ff; margin-left: 10px; }
.runner-tip { position: absolute; left: 1522px; top: 68px; width: 69px; height: 39px; background: #fff; border: 1px solid #333; padding: 2px 3px; font-size: 13px; letter-spacing: -.3px; color: #111; text-align: right; }
.runner-tip::before { content: ""; position: absolute; right: 2px; top: -6px; width: 8px; height: 8px; background: #fff; border-left: 1px solid #555; transform: skewX(-30deg); }
.tip-top { border-bottom: 1px solid #111; line-height: 15px; padding-bottom: 1px; text-align: left; }
.tip-bottom { line-height: 16px; padding-top: 1px; }
.pointer { position: absolute; left: 1046px; top: 377px; }
```
